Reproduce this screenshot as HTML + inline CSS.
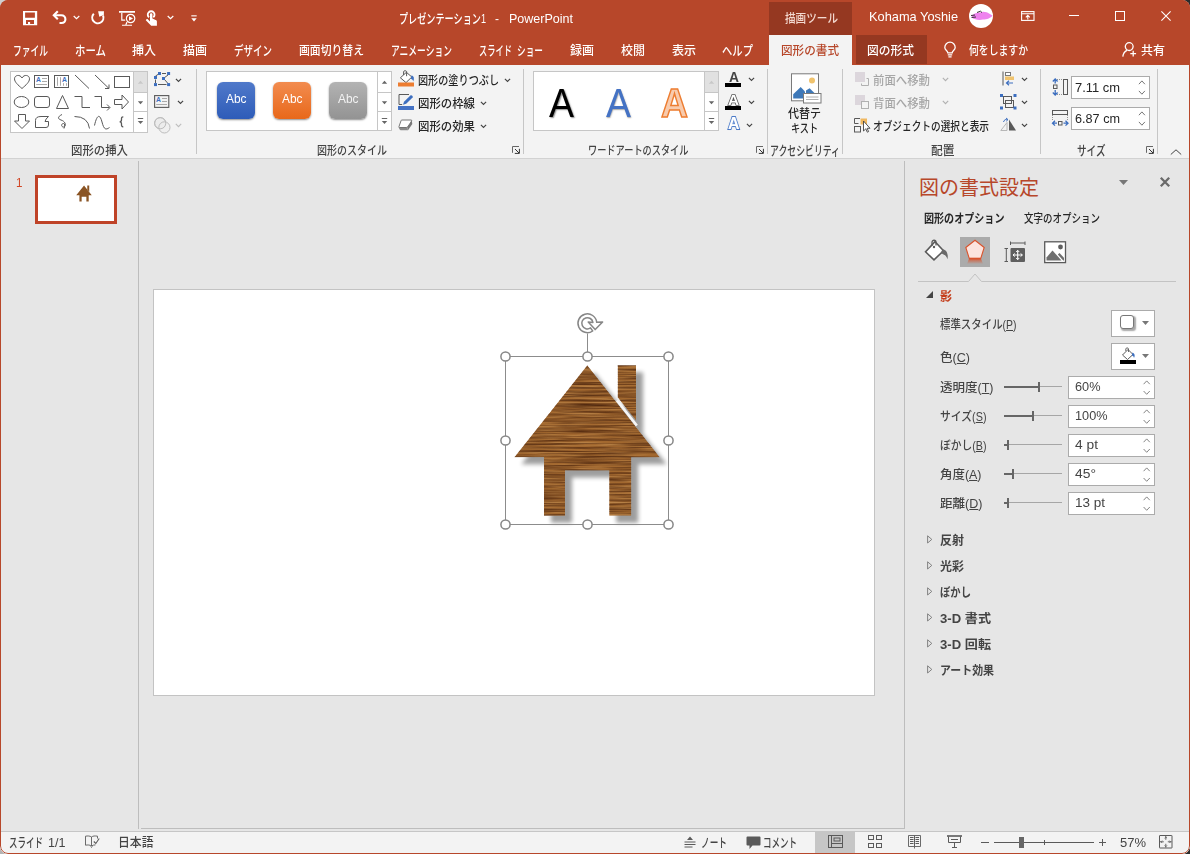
<!DOCTYPE html>
<html lang="ja">
<head>
<meta charset="utf-8">
<title>プレゼンテーション1 - PowerPoint</title>
<style>
html,body{margin:0;padding:0;}
body{width:1190px;height:854px;overflow:hidden;background:#2b2b2b;font-family:"Liberation Sans","Noto Sans CJK JP",sans-serif;font-size:12px;color:#262626;font-weight:500;}
#win{position:absolute;left:0;top:0;width:1190px;height:854px;overflow:hidden;border-radius:8px;background:#e6e6e6;}
#frame{position:absolute;left:0;top:0;width:1188px;height:852px;border:1px solid #b7472a;border-radius:8px;pointer-events:none;z-index:50;}
.abs{position:absolute;}
.t{position:absolute;white-space:nowrap;transform-origin:0 50%;display:inline-block;line-height:16px;height:16px;}
.w{color:#fff;}
.g{color:#444;}
.dis{color:#a6a6a6;}
svg{position:absolute;overflow:visible;}
.vsep{position:absolute;width:1px;background:#c6c6c6;}
#title{position:absolute;left:0;top:0;width:1190px;height:65px;background:#b7472a;}
#ribbon{position:absolute;left:0;top:65px;width:1190px;height:93px;background:#f3f3f3;border-bottom:1px solid #d2d2d2;}
.gal{position:absolute;background:#fff;border:1px solid #c6c6c6;box-sizing:border-box;}
.inp{position:absolute;background:#fff;border:1px solid #ababab;box-sizing:border-box;}
u{text-decoration:underline;text-underline-offset:1px;}
</style>
</head>
<body>
<div class="abs" style="left:0;top:0;width:10px;height:10px;background:#cfcfcf"></div>
<div class="abs" style="left:0;top:844px;width:10px;height:10px;background:#b4b4b4"></div>
<div id="win">
<div id="title">
  <!-- QAT icons -->
  <svg style="left:23px;top:10.800px" width="14.200" height="14.200" viewBox="0 0 14.200 14.200"><path fill-rule="evenodd" fill="#fff" d="M0 0H14.200V14.200H0ZM2.100 1.400V6.700H11.900V1.400ZM3 9.100V12.900H5V11H7.100V12.900H11V9.100Z"/></svg>
  <svg style="left:52px;top:10px" width="15" height="15" viewBox="0 0 15 15" fill="none" stroke="#fff" stroke-width="2.100" stroke-linecap="butt"><path d="M5.800 1.200L1.800 5.200L5.800 9.200"/><path d="M2 5.200H9.200C12 5.200 13.400 7 13.400 9.200C13.400 11.600 12 13 9.500 13H7.500"/></svg>
  <svg style="left:73px;top:15px" width="7" height="5" viewBox="0 0 7 5" fill="none" stroke="#fff" stroke-width="1.200"><path d="M0.700 1L3.500 3.700L6.300 1"/></svg>
  <svg style="left:91px;top:10px" width="14" height="15" viewBox="0 0 14 15" fill="none"><path d="M2.800 3.800A5.600 5.600 0 1 0 12 5.500" stroke="#fff" stroke-width="2"/><path d="M7.100 1.200L13 1.300L12.800 5L8.300 6.800Z" fill="#fff"/></svg>
  <svg style="left:119px;top:10px" width="17" height="16" viewBox="0 0 17 16" fill="none" stroke="#fff" stroke-width="1.200"><path d="M0 1.900H16" stroke-width="1.800"/><path d="M2.800 2.800V10.200H6.200"/><circle cx="11.600" cy="8.500" r="4.200"/><path d="M10 6.200L14 8.500L10 10.800Z" fill="#fff" stroke="none"/><path d="M8 12L6.800 15"/><path d="M3 15.300H13" stroke-width="1.100"/></svg>
  <svg style="left:145px;top:9px" width="14" height="18" viewBox="-1 -1 14 18" fill="#fff" stroke="none"><path d="M3 7.300A3.400 3.400 0 1 1 7.300 7.300" fill="none" stroke="#fff" stroke-width="1.800"/><path d="M4 3.900C4 2.900 6.400 2.900 6.400 3.900V8.500L10.200 10.200C10.800 10.500 10.900 11 10.900 11.500V15.800H5.200L-0.200 10.200C0.300 9 1.300 8.800 2 9.500L4 11.400Z"/></svg>
  <svg style="left:166.500px;top:15px" width="7" height="5" viewBox="0 0 7 5" fill="none" stroke="#fff" stroke-width="1.200"><path d="M0.700 1L3.500 3.700L6.300 1"/></svg>
  <svg style="left:190.500px;top:14.500px" width="6" height="7" viewBox="0 0 6 7" fill="#fff"><rect x="0.300" y="0.300" width="5.400" height="1.100"/><path d="M0.300 3.300H5.700L3 6.500Z"/></svg>

  <span class="t w" style="transform:scaleX(0.7017);left:399px;top:11px;font-size:13px">プレゼンテーション1</span>
  <span class="t w" style="transform:scaleX(0.9209);left:494.5px;top:11px;font-size:13px">-</span>
  <span class="t w" style="transform:scaleX(0.9626);left:509px;top:11px;font-size:13px">PowerPoint</span>

  <!-- contextual tab header -->
  <div class="abs" style="left:769px;top:2px;width:83px;height:33px;background:#953821"></div>
  <span class="t" style="transform:scaleX(0.8831);left:785px;top:11px;font-size:12px;color:#f3d9d0">描画ツール</span>
  <!-- active tab -->
  <div class="abs" style="left:769px;top:35px;width:83px;height:30px;background:#f3f3f3"></div>
  <div class="abs" style="left:856px;top:35px;width:71px;height:29px;background:#953821"></div>

  <span class="t w" style="transform:scaleX(0.9850);left:869px;top:9px;font-size:13px">Kohama Yoshie</span>
  <!-- avatar -->
  <div class="abs" style="left:969px;top:4px;width:24px;height:24px;border-radius:50%;background:#fff"></div>
  <svg style="left:970px;top:10px" width="23" height="12" viewBox="0 0 23 12"><path d="M1.5 6C4 3 7 2.5 10 2.5C13 1 17 2 19 3.5L22.5 5.5C21 8 17 9.5 13 9.500C9 10.5 4 9.5 2.5 8Z" fill="#ee82ee"/><path d="M7 2.5L10.5 1.2L12 2.600M1 5.5L5 5M1.5 7.5L6 7" stroke="#222" stroke-width="0.9" fill="none"/></svg>
  <!-- window buttons -->
  <svg style="left:1021px;top:11px" width="14" height="10" viewBox="0 0 14 10" fill="none" stroke="#fff" stroke-width="1.1"><rect x="0.6" y="0.6" width="12.4" height="8.8"/><path d="M0.6 2.800H13"/><path d="M6.8 8.6V4.600M4.8 6.4L6.8 4.4L8.8 6.4"/></svg>
  <div class="abs" style="left:1069px;top:15px;width:10px;height:1px;background:#fff"></div>
  <div class="abs" style="left:1115px;top:11px;width:8px;height:8px;border:1px solid #fff"></div>
  <svg style="left:1161px;top:11px" width="10" height="10" viewBox="0 0 10 10" fill="none" stroke="#fff" stroke-width="1.1"><path d="M0.4 0.4L9.6 9.6M9.6 0.4L0.4 9.6"/></svg>

  <!-- tabs -->
  <span class="t w" style="transform:scaleX(0.6729);left:13px;top:43px;font-size:13px">ファイル</span>
  <span class="t w" style="transform:scaleX(0.8026);left:75px;top:43px;font-size:13px">ホーム</span>
  <span class="t w" style="transform:scaleX(0.9993);left:132px;top:43px">挿入</span>
  <span class="t w" style="transform:scaleX(0.9993);left:183px;top:43px">描画</span>
  <span class="t w" style="transform:scaleX(0.7305);left:234px;top:43px;font-size:13px">デザイン</span>
  <span class="t w" style="transform:scaleX(0.9026);left:299px;top:43px">画面切り替え</span>
  <span class="t w" style="transform:scaleX(0.6741);left:391px;top:43px;font-size:13px">アニメーション</span>
  <span class="t w" style="transform:scaleX(0.6344);left:478.500px;top:43px;font-size:13px">スライド</span>
  <span class="t w" style="transform:scaleX(0.6664);left:516.500px;top:43px;font-size:13px">ショー</span>
  <span class="t w" style="transform:scaleX(0.9993);left:570px;top:43px">録画</span>
  <span class="t w" style="transform:scaleX(0.9993);left:621px;top:43px">校閲</span>
  <span class="t w" style="transform:scaleX(0.9993);left:672px;top:43px">表示</span>
  <span class="t w" style="transform:scaleX(0.7946);left:722px;top:43px;font-size:13px">ヘルプ</span>
  <span class="t" style="transform:scaleX(0.9664);left:781px;top:43px;color:#b7472a">図形の書式</span>
  <span class="t w" style="transform:scaleX(0.9788);left:867px;top:43px">図の形式</span>
  <svg style="left:943.500px;top:42px" width="12" height="16" viewBox="0 0 12 16" fill="none" stroke="#fff" stroke-width="1.300"><path d="M3.800 10.800C3.800 8.800 0.800 8 0.800 5.400A5.200 5.200 0 0 1 11.200 5.400C11.200 8 8.200 8.800 8.200 10.800Z"/><path d="M3.800 12.800H8.200M4.400 14.800H7.600"/></svg>
  <span class="t w" style="transform:scaleX(0.8193);left:969px;top:43px">何をしますか</span>
  <svg style="left:1122px;top:42px" width="15" height="15" viewBox="0 0 15 15" fill="none" stroke="#fff" stroke-width="1.300"><circle cx="7.200" cy="4.600" r="3.900"/><path d="M0.800 14.600C1.200 11.400 2.800 9.400 5 8.400"/><path d="M11.200 8.800V14.600M8.300 11.700H14.100"/></svg>
  <span class="t w" style="transform:scaleX(0.9993);left:1141px;top:43px">共有</span>
</div>
<div id="ribbon">
  <!-- coordinates inside ribbon: y = pageY - 65 -->
  <!-- ===== 図形の挿入 ===== -->
  <div class="gal" style="left:10px;top:6px;width:138px;height:62px"></div>
  <div class="abs" style="left:133px;top:7px;width:14px;height:20px;background:#e1e1e1"></div>
  <div class="abs" style="left:133px;top:7px;width:1px;height:60px;background:#c6c6c6"></div>
  <div class="abs" style="left:133px;top:27px;width:14px;height:1px;background:#c6c6c6"></div>
  <div class="abs" style="left:133px;top:46px;width:14px;height:1px;background:#c6c6c6"></div>
  <svg style="left:137px;top:15px" width="7" height="4" viewBox="0 0 7 4"><path d="M0.800 3.800L3.500 0.800L6.200 3.800Z" fill="#c8c8c8"/></svg>
  <svg style="left:137px;top:36px" width="7" height="4" viewBox="0 0 7 4"><path d="M0.800 0.200L3.500 3.200L6.200 0.200Z" fill="#666"/></svg>
  <svg style="left:137px;top:53px" width="7" height="8" viewBox="0 0 7 8"><rect x="0.800" y="0" width="5.400" height="1" fill="#666"/><path d="M0.800 3L3.500 6L6.200 3Z" fill="#666"/></svg>
  <!-- shapes grid -->
  <svg style="left:12px;top:8px" width="120" height="60" viewBox="12 73 120 60" fill="none" stroke="#595959" stroke-width="1">
    <!-- row1 y~81 -->
    <path d="M22 88.5C18 85 14.5 82 14.5 78.8C14.5 75 20 74 22 78C24 74 29.500 75 29.500 78.8C29.500 82 26 85 22 88.500Z"/>
    <rect x="34.500" y="75.500" width="14" height="12"/><path d="M42 78.500H47M42 81.500H47M36.200 84.500H47" stroke="#a0a0a0" stroke-width="0.900"/>
    <text x="36" y="82" font-size="6.800" font-weight="bold" fill="#3c6ebf" stroke="none" font-family="Liberation Sans,sans-serif">A</text>
    <rect x="54.500" y="75.500" width="14" height="12"/><path d="M57.500 77.200V85.800M60.500 77.200V85.800M63.500 83.200V85.800M66.500 83.200V85.800" stroke="#a0a0a0" stroke-width="0.900"/>
    <text x="62" y="82" font-size="6.800" font-weight="bold" fill="#3c6ebf" stroke="none" font-family="Liberation Sans,sans-serif">A</text>
    <path d="M75 75L89 88.500"/>
    <path d="M95 75L109 88.500M109 84.500V88.500H105"/>
    <rect x="114.500" y="76.500" width="15" height="11"/>
    <!-- row2 y~102 -->
    <ellipse cx="21.500" cy="102" rx="7.300" ry="5.500"/>
    <rect x="34.500" y="96.500" width="15" height="11" rx="2.500"/>
    <path d="M62.500 95.500L68.500 108.500H56.500Z"/>
    <path d="M74.500 96.500H82V107.500H90"/>
    <path d="M94.500 96.500H101.500V107.500H109.500M107 104.500L110 107.500L107 110.500"/>
    <path d="M114.500 99.500H122V95L128.500 102L122 109V104.500H114.500Z"/>
    <!-- row3 y~122 -->
    <path d="M18.500 114.500H25.500V121H29.500L22 128.500L14.500 121H18.500Z"/>
    <path d="M35.500 127.500V120.500Q35.500 116.500 41 116.500H48.500Q45.500 119 45 121.500H48.500V125Q48.500 127.500 46 127.500Z"/>
    <path d="M62 114.500C57 117 58 119 61 120C66 121.500 66.500 126.500 63.500 127C61 127 61 123.500 63.500 123.500C65 123.500 65 126 64 128.500"/>
    <path d="M74.500 116.500Q88 116.500 89.500 128.500"/>
    <path d="M94.500 125.500C97 114 100 114 102 122C104 130 106 130 109.500 127.500"/>
    <path d="M123.300 116.800C121.300 116.800 121.500 118.300 121.500 119.800C121.500 121.200 120.800 121.800 119.600 121.800C120.800 121.800 121.500 122.400 121.500 123.800C121.500 125.300 121.300 126.800 123.300 126.800" stroke-width="1.300"/>
  </svg>
  <!-- right small buttons -->
  <svg style="left:153px;top:6px" width="18" height="16" viewBox="0 0 18 16" fill="none"><path d="M9 2.500H13M2.500 5L6 2.800M15 4L11 7M11.500 8.500L15 12.500M2.500 8.500V12M5 13.500H13.500" stroke="#595959" stroke-width="1"/><g fill="#3c6ebf"><rect x="5" y="1" width="3" height="3"/><rect x="14.100" y="1" width="3" height="3"/><rect x="1" y="5" width="3" height="3"/><rect x="9" y="6" width="3" height="3"/><rect x="1" y="12.100" width="3" height="3"/><rect x="14.100" y="12.100" width="3" height="3"/></g></svg>
  <svg style="left:174.700px;top:12.500px" width="7" height="5" viewBox="0 0 7 5" fill="none" stroke="#444" stroke-width="1.150"><path d="M0.900 0.800L3.500 3.400L6.100 0.800"/></svg>
  <svg style="left:154px;top:30px" width="16" height="13" viewBox="0 0 16 13" fill="none" stroke="#595959" stroke-width="1.100"><rect x="0.600" y="0.600" width="14.200" height="11.800"/><path d="M8 3.500H13M8 6.500H13M2.200 9.500H13" stroke="#a0a0a0" stroke-width="0.900"/><text x="2" y="7.200" font-size="6.800" font-weight="bold" fill="#3c6ebf" stroke="none" font-family="Liberation Sans,sans-serif">A</text></svg>
  <svg style="left:177px;top:35px" width="7" height="5" viewBox="0 0 7 5" fill="none" stroke="#444" stroke-width="1.150"><path d="M0.900 0.800L3.500 3.400L6.100 0.800"/></svg>
  <svg style="left:154px;top:52px" width="17" height="17" viewBox="0 0 17 17" stroke="#bdbdbd" stroke-width="1"><circle cx="6.200" cy="6.200" r="5.600" fill="#ececec"/><circle cx="10.400" cy="10.400" r="5.600" fill="#ececec" fill-opacity="0.700"/><circle cx="6.200" cy="6.200" r="5.600" fill="none"/></svg>
  <svg style="left:175px;top:58px" width="7" height="5" viewBox="0 0 7 5" fill="none" stroke="#bdbdbd" stroke-width="1.100"><path d="M0.800 0.800L3.500 3.600L6.200 0.800"/></svg>
  <span class="t g" style="transform:scaleX(0.9498);left:70.500px;top:77.500px">図形の挿入</span>
  <div class="vsep" style="left:196px;top:4px;height:85px"></div>

  <!-- ===== 図形のスタイル ===== -->
  <div class="gal" style="left:206px;top:6px;width:186px;height:60px"></div>
  <div class="abs" style="left:377px;top:7px;width:1px;height:58px;background:#c6c6c6"></div>
  <div class="abs" style="left:377px;top:27px;width:14px;height:1px;background:#c6c6c6"></div>
  <div class="abs" style="left:377px;top:46px;width:14px;height:1px;background:#c6c6c6"></div>
  <svg style="left:381px;top:15px" width="7" height="4" viewBox="0 0 7 4"><path d="M0.800 3.800L3.500 0.800L6.200 3.800Z" fill="#666"/></svg>
  <svg style="left:381px;top:36px" width="7" height="4" viewBox="0 0 7 4"><path d="M0.800 0.200L3.500 3.200L6.200 0.200Z" fill="#666"/></svg>
  <svg style="left:381px;top:53px" width="7" height="8" viewBox="0 0 7 8"><rect x="0.800" y="0" width="5.400" height="1" fill="#666"/><path d="M0.800 3L3.500 6L6.200 3Z" fill="#666"/></svg>
  <div class="abs" style="left:217.300px;top:16.500px;width:37.600px;height:37px;border-radius:6px;background:linear-gradient(#5079ca,#2e5cb8);box-shadow:0 1px 2px rgba(0,0,0,.45)"></div>
  <div class="abs" style="left:273.300px;top:16.500px;width:37.600px;height:37px;border-radius:6px;background:linear-gradient(#f28c50,#e8681a);box-shadow:0 1px 2px rgba(0,0,0,.45)"></div>
  <div class="abs" style="left:329.300px;top:16.500px;width:37.600px;height:37px;border-radius:6px;background:linear-gradient(#b3b3b3,#939393);box-shadow:0 1px 2px rgba(0,0,0,.45)"></div>
  <span class="t w" style="transform:scaleX(0.9909);left:226px;top:26px;font-size:12px">Abc</span>
  <span class="t w" style="transform:scaleX(0.9909);left:282px;top:26px;font-size:12px">Abc</span>
  <span class="t w" style="transform:scaleX(0.9909);left:338px;top:26px;font-size:12px;color:#f2f2f2">Abc</span>

  <svg style="left:398px;top:4px" width="17" height="18" viewBox="0 0 17 18" fill="none"><path d="M2.400 8.800L8.400 3.300L13.800 8L8 13.600Z" fill="#fff" stroke="#595959" stroke-width="1"/><path d="M5.600 6V2.600C5.600 1.500 8.600 1.500 8.600 2.600V7.200" stroke="#595959" stroke-width="1"/><path d="M13.600 6.200C16 7 16.600 9.500 15.200 12.500C15 11 14.200 10.200 12.800 9.800Z" fill="#3c6ebf"/><rect x="0" y="13.500" width="16" height="4" fill="#ed7d31"/></svg>
  <span class="t" style="transform:scaleX(0.8427);left:417.500px;top:7.500px;color:#262626">図形の塗りつぶし</span>
  <svg style="left:503.500px;top:12.500px" width="7" height="5" viewBox="0 0 7 5" fill="none" stroke="#444" stroke-width="1.150"><path d="M0.900 0.800L3.500 3.400L6.100 0.800"/></svg>

  <svg style="left:398px;top:29px" width="17" height="17" viewBox="0 0 17 17" fill="none"><path d="M11 0.500H1V10.500H4.200" stroke="#595959" stroke-width="1"/><path d="M5 10.800L6 7.800L12.400 1.400C13.400 0.400 15.600 2.400 14.600 3.500L8.200 9.800Z" fill="#3c6ebf"/><rect x="0" y="12" width="16" height="4" fill="#4472c4"/></svg>
  <span class="t" style="transform:scaleX(0.9498);left:417.500px;top:30.500px;color:#262626">図形の枠線</span>
  <svg style="left:479.500px;top:36px" width="7" height="5" viewBox="0 0 7 5" fill="none" stroke="#444" stroke-width="1.150"><path d="M0.900 0.800L3.500 3.400L6.100 0.800"/></svg>

  <svg style="left:398px;top:54px" width="16" height="12" viewBox="0 0 16 12" fill="none"><path d="M0.800 8L9.300 8.500L10 11.300H2.500Q1 11 0.800 8Z" fill="#8a8a8a"/><path d="M13.800 1.500L14.300 5L10 11.300L9.300 8.300Z" fill="#7a7a7a"/><path d="M3.800 1H13Q14.200 1 13.600 2L9.600 8Q9.200 8.500 8.200 8.500H1.600Q0.400 8.500 1 7.500L3 1.800Q3.200 1 3.800 1Z" fill="#fff" stroke="#6a6a6a" stroke-width="0.900"/></svg>
  <span class="t" style="transform:scaleX(0.9498);left:417.500px;top:53.500px;color:#262626">図形の効果</span>
  <svg style="left:479.500px;top:58.500px" width="7" height="5" viewBox="0 0 7 5" fill="none" stroke="#444" stroke-width="1.150"><path d="M0.900 0.800L3.500 3.400L6.100 0.800"/></svg>

  <span class="t g" style="transform:scaleX(0.8332);left:317px;top:77.500px">図形のスタイル</span>
  <svg style="left:512px;top:81px" width="8" height="8" viewBox="0 0 8 8" fill="none" stroke="#666" stroke-width="1"><path d="M0.500 6.800V0.500H7" stroke="#666"/><path d="M3 3L7 7M7.400 2.800V7.400H2.800" stroke="#333"/></svg>
  <div class="vsep" style="left:523px;top:4px;height:85px"></div>
  <!-- ===== ワードアートのスタイル ===== -->
  <div class="gal" style="left:533px;top:6px;width:186px;height:60px"></div>
  <div class="abs" style="left:704px;top:7px;width:14px;height:20px;background:#e1e1e1"></div>
  <div class="abs" style="left:704px;top:7px;width:1px;height:58px;background:#c6c6c6"></div>
  <div class="abs" style="left:704px;top:27px;width:14px;height:1px;background:#c6c6c6"></div>
  <div class="abs" style="left:704px;top:46px;width:14px;height:1px;background:#c6c6c6"></div>
  <svg style="left:708px;top:15px" width="7" height="4" viewBox="0 0 7 4"><path d="M0.800 3.800L3.500 0.800L6.200 3.800Z" fill="#c8c8c8"/></svg>
  <svg style="left:708px;top:36px" width="7" height="4" viewBox="0 0 7 4"><path d="M0.800 0.200L3.500 3.200L6.200 0.200Z" fill="#666"/></svg>
  <svg style="left:708px;top:53px" width="7" height="8" viewBox="0 0 7 8"><rect x="0.800" y="0" width="5.400" height="1" fill="#666"/><path d="M0.800 3L3.500 6L6.200 3Z" fill="#666"/></svg>
  <span class="t" style="transform:scaleX(0.9368);left:549px;top:14px;font-size:40px;line-height:48px;height:48px;color:#000;text-shadow:1px 1px 1.500px rgba(0,0,0,.45)">A</span>
  <span class="t" style="transform:scaleX(0.9368);left:606px;top:14px;font-size:40px;line-height:48px;height:48px;color:#4472c4;text-shadow:0.500px 1px 1.500px rgba(0,0,0,.35)">A</span>
  <span class="t" style="transform:scaleX(0.9346);left:660.500px;top:14px;font-size:40px;line-height:48px;height:48px;color:#f8cbad;-webkit-text-stroke:1.500px #ed7d31;font-weight:bold">A</span>

  <!-- text fill / outline / effects -->
  <span class="t" style="transform:scaleX(0.9877);left:728.500px;top:4px;font-size:14px;color:#444;font-weight:bold">A</span>
  <div class="abs" style="left:725px;top:18px;width:16px;height:4px;background:#000"></div>
  <svg style="left:747.500px;top:12px" width="7" height="5" viewBox="0 0 7 5" fill="none" stroke="#444" stroke-width="1.150"><path d="M0.900 0.800L3.500 3.400L6.100 0.800"/></svg>
  <span class="t" style="transform:scaleX(1.0864);left:727.500px;top:26.500px;font-size:14px;color:#fff;-webkit-text-stroke:1.500px #555;paint-order:stroke fill;font-weight:bold">A</span>
  <div class="abs" style="left:725px;top:41px;width:16px;height:4px;background:#000"></div>
  <svg style="left:747.500px;top:35px" width="7" height="5" viewBox="0 0 7 5" fill="none" stroke="#444" stroke-width="1.150"><path d="M0.900 0.800L3.500 3.400L6.100 0.800"/></svg>
  <span class="t" style="transform:scaleX(0.9364);left:727.500px;top:51px;font-size:17px;color:#fff;-webkit-text-stroke:1.800px #3c6ebf;paint-order:stroke fill;font-weight:bold;text-shadow:0 0 2px #8fb0e8">A</span>
  <svg style="left:745.500px;top:58px" width="7" height="5" viewBox="0 0 7 5" fill="none" stroke="#444" stroke-width="1.150"><path d="M0.900 0.800L3.500 3.400L6.100 0.800"/></svg>

  <span class="t g" style="transform:scaleX(0.7655);left:587.500px;top:77.500px">ワードアートのスタイル</span>
  <svg style="left:756px;top:81px" width="8" height="8" viewBox="0 0 8 8" fill="none" stroke="#666" stroke-width="1"><path d="M0.500 6.800V0.500H7" stroke="#666"/><path d="M3 3L7 7M7.400 2.800V7.400H2.800" stroke="#333"/></svg>
  <div class="vsep" style="left:767px;top:4px;height:85px"></div>

  <!-- ===== アクセシビリティ ===== -->
  <svg style="left:790px;top:8px" width="32" height="31" viewBox="0 0 32 31" fill="none"><rect x="1.500" y="0.800" width="27" height="27" fill="#fff" stroke="#7a7a7a" stroke-width="1"/><circle cx="22" cy="7.500" r="3" fill="#f0c36d"/><path d="M3.200 25.500V21.300L10.700 14L15 18.500V25.500Z" fill="#3e78b8"/><path d="M16 17.500L19.600 15.200L26.500 22V25.500H16Z" fill="#3e78b8"/><rect x="13.500" y="20.500" width="17.500" height="9.500" fill="#fff" stroke="#7a7a7a" stroke-width="1"/><path d="M16 24H28.500M16 26.500H28.500" stroke="#9a9a9a" stroke-width="0.800"/></svg>
  <span class="t" style="transform:scaleX(0.9163);left:788px;top:40.500px;color:#262626">代替テ</span>
  <span class="t" style="transform:scaleX(0.7576);left:791px;top:56px;color:#262626">キスト</span>
  <span class="t g" style="transform:scaleX(0.6824);left:770px;top:77.500px;font-size:13px">アクセシビリティ</span>
  <div class="vsep" style="left:842px;top:4px;height:85px"></div>

  <!-- ===== 配置 ===== -->
  <svg style="left:855px;top:7px" width="15" height="14" viewBox="0 0 15 14" fill="none"><rect x="0" y="0" width="10" height="10" fill="#dcd6dc"/><path d="M11.500 6.500H13.500V13.500H6.500V11.500" stroke="#b0b0b0" stroke-width="1"/></svg>
  <span class="t dis" style="transform:scaleX(0.9498);left:873px;top:7.500px">前面へ移動</span>
  <svg style="left:941.500px;top:12px" width="7" height="5" viewBox="0 0 7 5" fill="none" stroke="#b0b0b0" stroke-width="1.100"><path d="M0.800 0.800L3.500 3.600L6.200 0.800"/></svg>
  <svg style="left:855px;top:30px" width="15" height="14" viewBox="0 0 15 14" fill="none"><rect x="0" y="0" width="10" height="10" fill="#dcd6dc"/><rect x="6.500" y="6.500" width="7" height="7" fill="#f3f3f3" stroke="#b0b0b0" stroke-width="1"/></svg>
  <span class="t dis" style="transform:scaleX(0.9498);left:873px;top:30.500px">背面へ移動</span>
  <svg style="left:941.500px;top:35px" width="7" height="5" viewBox="0 0 7 5" fill="none" stroke="#b0b0b0" stroke-width="1.100"><path d="M0.800 0.800L3.500 3.600L6.200 0.800"/></svg>
  <svg style="left:854px;top:52px" width="17" height="17" viewBox="0 0 17 17" fill="none"><path d="M6 1.500H0.500V6.500H4.500" stroke="#595959" stroke-width="1"/><rect x="0.500" y="9.500" width="6" height="5.500" stroke="#595959" stroke-width="1"/><rect x="6.500" y="1.500" width="6.500" height="6" fill="#f0b860"/><path d="M9.500 4V14L11.800 11.800L13.300 15.200L14.600 14.600L13.100 11.300H16Z" fill="#fff" stroke="#444" stroke-width="0.900"/></svg>
  <span class="t" style="transform:scaleX(0.8055);left:873px;top:53.500px;color:#262626">オブジェクトの選択と表示</span>
  <!-- align / group / rotate -->
  <svg style="left:1002px;top:6px" width="13" height="15" viewBox="0 0 13 15" fill="none"><path d="M1 0.500V14.500" stroke="#595959" stroke-width="1"/><rect x="3.500" y="1.500" width="5" height="3" stroke="#7a7a7a" stroke-width="1" fill="#fff"/><rect x="3" y="5.500" width="9" height="3.500" fill="#f0c36d"/><path d="M11 12H4.500M7 9.700L4.500 12L7 14.300" stroke="#3c6ebf" stroke-width="1.200"/></svg>
  <svg style="left:1020.500px;top:12px" width="7" height="5" viewBox="0 0 7 5" fill="none" stroke="#444" stroke-width="1.150"><path d="M0.900 0.800L3.500 3.400L6.100 0.800"/></svg>
  <svg style="left:1000px;top:29px" width="17" height="16" viewBox="0 0 17 16" fill="none"><rect x="3.500" y="2.500" width="8" height="7" stroke="#595959" stroke-width="1"/><rect x="5.500" y="6.500" width="8" height="7" stroke="#595959" stroke-width="1"/><g fill="#3c6ebf"><rect x="0" y="0" width="3" height="3"/><rect x="13.500" y="0" width="3" height="3"/><rect x="0" y="12.500" width="3" height="3"/><rect x="13.500" y="12.500" width="3" height="3"/></g></svg>
  <svg style="left:1020.500px;top:35px" width="7" height="5" viewBox="0 0 7 5" fill="none" stroke="#444" stroke-width="1.150"><path d="M0.900 0.800L3.500 3.400L6.100 0.800"/></svg>
  <svg style="left:1000px;top:53px" width="17" height="13" viewBox="0 0 17 13" fill="none"><path d="M7 12.500H0.800L7 4.500Z" stroke="#b0b0b0" stroke-width="0.900"/><path d="M9 12.500V1.500L16 12.500Z" fill="#595959"/><path d="M3.500 4C4 1.800 6 1 7.500 1.500M6 0L8 1.600L6.200 3.200" stroke="#3c6ebf" stroke-width="1"/></svg>
  <svg style="left:1020.500px;top:58px" width="7" height="5" viewBox="0 0 7 5" fill="none" stroke="#444" stroke-width="1.150"><path d="M0.900 0.800L3.500 3.400L6.100 0.800"/></svg>
  <span class="t g" style="transform:scaleX(0.9785);left:930.500px;top:77.500px">配置</span>
  <div class="vsep" style="left:1040px;top:4px;height:85px"></div>

  <!-- ===== サイズ ===== -->
  <svg style="left:1052px;top:13px" width="17" height="18" viewBox="0 0 17 18" fill="none"><rect x="11.500" y="1.500" width="4" height="15" stroke="#595959" stroke-width="1"/><path d="M5 1.500H11M5 16.500H11" stroke="#7a7a7a" stroke-width="0.800" stroke-dasharray="1 1"/><rect x="1.500" y="7" width="3.500" height="3.500" stroke="#595959" stroke-width="1"/><path d="M3.200 5.500V1.500M0.800 3.500L3.200 1L5.600 3.500M3.200 12V16.500M0.800 14.500L3.200 17L5.600 14.500" stroke="#3c6ebf" stroke-width="1.300"/></svg>
  <div class="inp" style="left:1071px;top:11px;width:79px;height:23px"></div>
  <span class="t" style="transform:scaleX(0.9938);left:1075px;top:14.500px;font-size:13px;color:#262626">7.11 cm</span>
  <svg style="left:1137.500px;top:14px" width="8" height="17" viewBox="0 0 8 17" fill="none" stroke="#666" stroke-width="0.900"><path d="M0.900 5.200L3.900 1.900L6.900 5.200M0.900 11.900L3.900 15.200L6.900 11.900"/></svg>
  <svg style="left:1052px;top:45px" width="17" height="17" viewBox="0 0 17 17" fill="none"><rect x="0.500" y="0.500" width="15" height="4" stroke="#595959" stroke-width="1"/><path d="M0.500 5V11M15.500 5V11" stroke="#7a7a7a" stroke-width="0.800" stroke-dasharray="1 1"/><rect x="6.500" y="11.500" width="3.500" height="3.500" stroke="#595959" stroke-width="1"/><path d="M5 13.200H0.800M3 10.800L0.500 13.200L3 15.600M11.500 13.200H15.500M13.500 10.800L16 13.200L13.500 15.600" stroke="#3c6ebf" stroke-width="1.300"/></svg>
  <div class="inp" style="left:1071px;top:42px;width:79px;height:23px"></div>
  <span class="t" style="transform:scaleX(0.9730);left:1075px;top:46px;font-size:13px;color:#262626">6.87 cm</span>
  <svg style="left:1137.500px;top:45px" width="8" height="17" viewBox="0 0 8 17" fill="none" stroke="#666" stroke-width="0.900"><path d="M0.900 5.200L3.900 1.900L6.900 5.200M0.900 11.900L3.900 15.200L6.900 11.900"/></svg>
  <span class="t g" style="transform:scaleX(0.7379);left:1077px;top:77.500px;font-size:13px">サイズ</span>
  <svg style="left:1146px;top:81px" width="8" height="8" viewBox="0 0 8 8" fill="none" stroke="#666" stroke-width="1"><path d="M0.500 6.800V0.500H7" stroke="#666"/><path d="M3 3L7 7M7.400 2.800V7.400H2.800" stroke="#333"/></svg>
  <div class="vsep" style="left:1157px;top:4px;height:85px"></div>
  <svg style="left:1170px;top:84px" width="12" height="6" viewBox="0 0 12 6" fill="none" stroke="#444" stroke-width="1"><path d="M0.800 5.500L6 0.800L11.200 5.500"/></svg>
</div>
<!-- ===== main work area ===== -->
<div class="abs" style="left:138px;top:161px;width:1px;height:668px;background:#bdbdbd"></div>
<div class="abs" style="left:141px;top:828px;width:764px;height:1px;background:#bdbdbd"></div>
<div class="abs" style="left:904px;top:161px;width:1px;height:668px;background:#bdbdbd"></div>
<!-- thumbnail -->
<span class="t" style="transform:scaleX(0.8985);left:15.500px;top:175px;font-size:13px;color:#d24726">1</span>
<div class="abs" style="left:35px;top:175px;width:76px;height:43px;border:3px solid #bf4328;background:#fff"></div>
<svg style="left:76px;top:185px" width="16" height="17" viewBox="512 364 150 154"><path d="M587.300 365.200L659.800 457.300H631.200V515.800H609.200V470.500H565V515.800H544V457.300H514.300Z" fill="#8a5424"/><path d="M617.700 365.200H636V427L617.700 404Z" fill="#8a5424"/></svg>
<!-- slide -->
<div class="abs" style="left:153px;top:289px;width:720px;height:405px;border:1px solid #c3c3c3;background:#fff"></div>
<svg style="left:480px;top:300px" width="220" height="240" viewBox="480 300 220 240">
  <defs>
    <filter id="wood" x="0" y="0" width="100%" height="100%" color-interpolation-filters="sRGB">
      <feTurbulence type="fractalNoise" baseFrequency="0.016 0.55" numOctaves="3" seed="7" result="n"/>
      <feColorMatrix in="n" type="matrix" values="0 0 0 0 0  0 0 0 0 0  0 0 0 0 0  1.900 0 0 0 -0.640" result="a"/>
      <feFlood flood-color="#52290f" result="dark"/>
      <feComposite in="dark" in2="a" operator="in" result="streak"/>
      <feTurbulence type="fractalNoise" baseFrequency="0.025 0.8" numOctaves="2" seed="23" result="n2"/>
      <feColorMatrix in="n2" type="matrix" values="0 0 0 0 0  0 0 0 0 0  0 0 0 0 0  0 1.600 0 0 -0.620" result="a2"/>
      <feFlood flood-color="#c08c50" result="light"/>
      <feComposite in="light" in2="a2" operator="in" result="hl"/>
      <feMerge result="m"><feMergeNode in="SourceGraphic"/><feMergeNode in="hl"/><feMergeNode in="streak"/></feMerge>
      <feComposite in="m" in2="SourceGraphic" operator="in"/>
    </filter>
    <filter id="shd" x="-20%" y="-20%" width="150%" height="150%"><feGaussianBlur stdDeviation="2"/></filter>
  </defs>
  <g transform="translate(7,7)" filter="url(#shd)" opacity="0.380" fill="#000">
    <path d="M587.300 365.200L659.800 457.300H631.200V515.800H609.200V470.500H565V515.800H544V457.300H514.300Z"/><path d="M617.700 365.200H636V427L617.700 404Z"/>
  </g>
  <path d="M617 400.500L636.800 425.600" stroke="#f6f6f6" stroke-width="2.600" fill="none"/>
  <g filter="url(#wood)" fill="#a2682f">
    <path d="M587.300 365.200L659.800 457.300H631.200V515.800H609.200V470.500H565V515.800H544V457.300H514.300Z"/><path d="M617.700 365.200H636V420.500L617.700 397.500Z"/>
  </g>
  <!-- selection -->
  <g fill="none" stroke="#8c8c8c" stroke-width="1">
    <rect x="505.500" y="356.500" width="163" height="168"/>
    <path d="M587.500 333.500V352"/>
  </g>
  <g fill="#fff" stroke="#868686" stroke-width="1.500">
    <circle cx="505.500" cy="356.500" r="4.600"/><circle cx="587.500" cy="356.500" r="4.600"/><circle cx="668.500" cy="356.500" r="4.600"/>
    <circle cx="505.500" cy="440.500" r="4.600"/><circle cx="668.500" cy="440.500" r="4.600"/>
    <circle cx="505.500" cy="524.500" r="4.600"/><circle cx="587.500" cy="524.500" r="4.600"/><circle cx="668.500" cy="524.500" r="4.600"/>
  </g>
  <path d="M592.700 331A9.400 9.400 0 1 1 596.700 322.300L602.600 322L595.200 329.600L588.200 322L592.900 322.400A5.600 5.600 0 1 0 590.500 327.900Z" fill="#fff" stroke="#868686" stroke-width="1.500" stroke-linejoin="round"/>
</svg>
<!-- ===== right pane ===== -->
<span class="t" style="transform:scaleX(1.0000);left:919px;top:173.500px;font-size:20px;line-height:28px;height:28px;font-weight:400;color:#b7472a">図の書式設定</span>
<svg style="left:1119px;top:180px" width="9" height="5" viewBox="0 0 9 5"><path d="M0 0H9L4.500 5Z" fill="#777"/></svg>
<svg style="left:1160px;top:177px" width="10" height="10" viewBox="0 0 10 10" fill="none" stroke="#6a6a6a" stroke-width="2.300"><path d="M0.800 0.800L9.200 9.200M9.200 0.800L0.800 9.200"/></svg>
<span class="t" style="transform:scaleX(0.8384);left:923.500px;top:211px;font-weight:bold;color:#262626">図形のオプション</span>
<span class="t" style="transform:scaleX(0.7915);left:1023.500px;top:211px;color:#262626">文字のオプション</span>
<!-- icon row -->
<svg style="left:923.500px;top:239px" width="25" height="23.500" viewBox="0 0 25 22" preserveAspectRatio="none" fill="none"><path d="M1.500 12L11 2.500L19.500 11L10 19.500Z" fill="#fff" stroke="#5a5a5a" stroke-width="1.500"/><path d="M8 6.500V3C8 0.500 12 0.500 12 3V6" stroke="#5a5a5a" stroke-width="1.300"/><circle cx="10" cy="7.500" r="1.200" fill="#5a5a5a"/><path d="M18.500 9.500C22.500 10 24.500 13.500 23.500 19C22.500 16 20.500 14 16.500 13.500Z" fill="#6a6a6a"/></svg>
<div class="abs" style="left:960px;top:237px;width:30px;height:30px;background:#ababab"></div>
<svg style="left:960px;top:237px" width="30" height="30" viewBox="0 0 30 30"><defs><linearGradient id="rf" x1="0" y1="0" x2="0" y2="1"><stop offset="0" stop-color="#d9532c" stop-opacity="0.850"/><stop offset="1" stop-color="#d9532c" stop-opacity="0"/></linearGradient></defs><path d="M15 3.300L24.200 10.500L20.800 21.300H9.200L5.800 10.500Z" fill="#fce4de" stroke="#d9532c" stroke-width="1.100"/><path d="M9 21.800H21L23 27H7Z" fill="url(#rf)"/><path d="M9 21.600H21" stroke="#d9532c" stroke-width="1.400"/></svg>
<svg style="left:1004px;top:240px" width="22" height="23" viewBox="0 0 22 23" fill="none"><path d="M6.500 1.500V5M6.500 3H21M21 1.500V5" stroke="#5a5a5a" stroke-width="1"/><path d="M0.500 8.500H4M2.300 8.500V21.500M0.500 21.500H4" stroke="#5a5a5a" stroke-width="1"/><rect x="6.500" y="8" width="14.500" height="14" rx="1" fill="#5f5f5f"/><path d="M13.700 10.500V19.500M9.200 15H18.200" stroke="#fff" stroke-width="1.100"/><path d="M12.200 12L13.700 10.300L15.200 12M12.200 18L13.700 19.700L15.200 18M10.800 13.500L9 15L10.800 16.500M16.600 13.500L18.400 15L16.600 16.500" stroke="#fff" stroke-width="1"/></svg>
<svg style="left:1043px;top:241px" width="24" height="23" viewBox="0 0 24 23" fill="none"><rect x="1.700" y="0.800" width="20.800" height="20.800" fill="#fff" stroke="#5a5a5a" stroke-width="1.300"/><circle cx="17.500" cy="6" r="2.400" fill="#5f5f5f"/><path d="M3.500 19.500V16.500L9.500 9.500L18.500 19.500Z" fill="#6f6f6f"/><path d="M14.800 13.500L16.500 12L21 16.800V19.500H20.200Z" fill="#6f6f6f"/></svg>
<!-- divider with notch -->
<svg style="left:918px;top:272px" width="258" height="11" viewBox="0 0 258 11" fill="none" stroke="#c3c3c3" stroke-width="1"><path d="M0 9.500H50.500L57 2L63.500 9.500H258"/></svg>
<!-- 影 section -->
<svg style="left:925.500px;top:291px" width="7" height="7" viewBox="0 0 7 7"><path d="M7 0V7H0Z" fill="#444"/></svg>
<span class="t" style="transform:scaleX(0.9588);left:940px;top:289px;font-size:12.500px;font-weight:bold;color:#c43e1c">影</span>
<span class="t g" style="transform:scaleX(0.8692);left:940px;top:317px">標準スタイル(<u>P</u>)</span>
<div class="abs" style="left:1111px;top:310px;width:42px;height:25px;border:1px solid #ababab;background:#fff"></div>
<div class="abs" style="left:1120px;top:315px;width:11.500px;height:11.500px;border:1.200px solid #777;border-radius:3px;background:#fff;box-shadow:1.500px 1.500px 1.500px rgba(0,0,0,.35)"></div>
<svg style="left:1142px;top:321px" width="7" height="4" viewBox="0 0 7 4"><path d="M0 0H7L3.500 4Z" fill="#777"/></svg>
<span class="t g" style="transform:scaleX(1.0463);left:940px;top:349.500px">色(<u>C</u>)</span>
<div class="abs" style="left:1111px;top:343px;width:42px;height:25px;border:1px solid #ababab;background:#fff"></div>
<svg style="left:1119px;top:345px" width="18" height="19" viewBox="0 0 18 19" fill="none"><path d="M3.500 10L9 4.500L14 9.500L8.500 14.500Z" fill="#fff" stroke="#5a5a5a" stroke-width="1"/><path d="M6.800 6V4C6.800 2.500 9.500 2.500 9.500 4V7" stroke="#5a5a5a" stroke-width="0.900"/><path d="M13.500 7.500C15.800 8.500 16.300 10.500 15 13C14.800 11.500 14 10.800 12.800 10.500Z" fill="#3c6ebf"/><rect x="1" y="15" width="16" height="4" fill="#000"/></svg>
<svg style="left:1142px;top:354px" width="7" height="4" viewBox="0 0 7 4"><path d="M0 0H7L3.500 4Z" fill="#777"/></svg>
<!-- slider rows -->
<span class="t g" style="transform:scaleX(1.0420);left:940px;top:379.5px">透明度(<u>T</u>)</span>
<div class="abs" style="left:1004px;top:386px;width:58px;height:1px;background:#a6a6a6"></div>
<div class="abs" style="left:1004px;top:385.5px;width:35px;height:2px;background:#666"></div>
<div class="abs" style="left:1038px;top:381.5px;width:2px;height:10px;background:#666"></div>
<div class="abs" style="left:1068px;top:376px;width:85px;height:21px;border:1px solid #ababab;background:#fff"></div>
<span class="t g" style="transform:scaleX(1.0187);left:1075px;top:379px;font-size:12.500px">60%</span>
<svg style="left:1142.500px;top:380px" width="8" height="15" viewBox="0 0 8 15" fill="none" stroke="#777" stroke-width="0.900"><path d="M0.600 4.200L3.700 0.900L6.800 4.200M0.600 11L3.700 14.300L6.800 11"/></svg>
<span class="t g" style="transform:scaleX(0.9002);left:940px;top:408.5px">サイズ(<u>S</u>)</span>
<div class="abs" style="left:1004px;top:415px;width:58px;height:1px;background:#a6a6a6"></div>
<div class="abs" style="left:1004px;top:414.5px;width:29px;height:2px;background:#666"></div>
<div class="abs" style="left:1032px;top:410.5px;width:2px;height:10px;background:#666"></div>
<div class="abs" style="left:1068px;top:405px;width:85px;height:21px;border:1px solid #ababab;background:#fff"></div>
<span class="t g" style="transform:scaleX(1.0161);left:1075px;top:408px;font-size:12.500px">100%</span>
<svg style="left:1142.500px;top:409px" width="8" height="15" viewBox="0 0 8 15" fill="none" stroke="#777" stroke-width="0.900"><path d="M0.600 4.200L3.700 0.900L6.800 4.200M0.600 11L3.700 14.300L6.800 11"/></svg>
<span class="t g" style="transform:scaleX(0.8940);left:940px;top:437.5px">ぼかし(<u>B</u>)</span>
<div class="abs" style="left:1004px;top:444px;width:58px;height:1px;background:#a6a6a6"></div>
<div class="abs" style="left:1004px;top:443.5px;width:3.5px;height:2px;background:#666"></div>
<div class="abs" style="left:1006.5px;top:439.5px;width:2px;height:10px;background:#666"></div>
<div class="abs" style="left:1068px;top:434px;width:85px;height:21px;border:1px solid #ababab;background:#fff"></div>
<span class="t g" style="transform:scaleX(1.1026);left:1075px;top:437px;font-size:12.500px">4 pt</span>
<svg style="left:1142.500px;top:438px" width="8" height="15" viewBox="0 0 8 15" fill="none" stroke="#777" stroke-width="0.900"><path d="M0.600 4.200L3.700 0.900L6.800 4.200M0.600 11L3.700 14.300L6.800 11"/></svg>
<span class="t g" style="transform:scaleX(1.0371);left:940px;top:466.5px">角度(<u>A</u>)</span>
<div class="abs" style="left:1004px;top:473px;width:58px;height:1px;background:#a6a6a6"></div>
<div class="abs" style="left:1004px;top:472.5px;width:8.5px;height:2px;background:#666"></div>
<div class="abs" style="left:1011.5px;top:468.5px;width:2px;height:10px;background:#666"></div>
<div class="abs" style="left:1068px;top:463px;width:85px;height:21px;border:1px solid #ababab;background:#fff"></div>
<span class="t g" style="transform:scaleX(1.1107);left:1075px;top:466px;font-size:12.500px">45°</span>
<svg style="left:1142.500px;top:467px" width="8" height="15" viewBox="0 0 8 15" fill="none" stroke="#777" stroke-width="0.900"><path d="M0.600 4.200L3.700 0.900L6.800 4.200M0.600 11L3.700 14.300L6.800 11"/></svg>
<span class="t g" style="transform:scaleX(1.0449);left:940px;top:495.5px">距離(<u>D</u>)</span>
<div class="abs" style="left:1004px;top:502px;width:58px;height:1px;background:#a6a6a6"></div>
<div class="abs" style="left:1004px;top:501.5px;width:4px;height:2px;background:#666"></div>
<div class="abs" style="left:1007px;top:497.5px;width:2px;height:10px;background:#666"></div>
<div class="abs" style="left:1068px;top:492px;width:85px;height:21px;border:1px solid #ababab;background:#fff"></div>
<span class="t g" style="transform:scaleX(1.0787);left:1075px;top:495px;font-size:12.500px">13 pt</span>
<svg style="left:1142.500px;top:496px" width="8" height="15" viewBox="0 0 8 15" fill="none" stroke="#777" stroke-width="0.900"><path d="M0.600 4.200L3.700 0.900L6.800 4.200M0.600 11L3.700 14.300L6.800 11"/></svg>
<!-- collapsed sections -->
<svg style="left:927px;top:534.5px" width="6" height="9" viewBox="0 0 6 9" fill="none" stroke="#777" stroke-width="0.900"><path d="M0.600 0.800L4.800 4.400L0.600 8Z"/></svg>
<span class="t" style="transform:scaleX(0.9993);left:940px;top:532.5px;font-weight:bold;color:#444">反射</span>
<svg style="left:927px;top:560.5px" width="6" height="9" viewBox="0 0 6 9" fill="none" stroke="#777" stroke-width="0.900"><path d="M0.600 0.800L4.800 4.400L0.600 8Z"/></svg>
<span class="t" style="transform:scaleX(0.9993);left:940px;top:558.5px;font-weight:bold;color:#444">光彩</span>
<svg style="left:927px;top:586.5px" width="6" height="9" viewBox="0 0 6 9" fill="none" stroke="#777" stroke-width="0.900"><path d="M0.600 0.800L4.800 4.400L0.600 8Z"/></svg>
<span class="t" style="transform:scaleX(0.8607);left:940px;top:584.5px;font-weight:bold;color:#444">ぼかし</span>
<svg style="left:927px;top:612.5px" width="6" height="9" viewBox="0 0 6 9" fill="none" stroke="#777" stroke-width="0.900"><path d="M0.600 0.800L4.800 4.400L0.600 8Z"/></svg>
<span class="t" style="transform:scaleX(1.0927);left:940px;top:610.5px;font-weight:bold;color:#444">3-D 書式</span>
<svg style="left:927px;top:638.5px" width="6" height="9" viewBox="0 0 6 9" fill="none" stroke="#777" stroke-width="0.900"><path d="M0.600 0.800L4.800 4.400L0.600 8Z"/></svg>
<span class="t" style="transform:scaleX(1.0927);left:940px;top:636.5px;font-weight:bold;color:#444">3-D 回転</span>
<svg style="left:927px;top:664.5px" width="6" height="9" viewBox="0 0 6 9" fill="none" stroke="#777" stroke-width="0.900"><path d="M0.600 0.800L4.800 4.400L0.600 8Z"/></svg>
<span class="t" style="transform:scaleX(0.9109);left:940px;top:662.5px;font-weight:bold;color:#444">アート効果</span>
<!-- ===== status bar ===== -->
<div class="abs" style="left:0;top:831px;width:1190px;height:1px;background:#c6c6c6"></div>
<div class="abs" style="left:0;top:832px;width:1190px;height:22px;background:#f3f3f3"></div>
<span class="t g" style="transform:scaleX(0.6536);left:8.500px;top:834.500px;font-size:13px">スライド</span>
<span class="t g" style="transform:scaleX(1.0063);left:47.500px;top:834.500px;font-size:12.500px">1/1</span>
<svg style="left:84.500px;top:835px" width="15" height="13" viewBox="0 0 15 13" fill="none" stroke="#5a5a5a" stroke-width="0.900"><path d="M6.500 2C5 0.800 2.500 0.800 0.500 1.200V10.200C2.500 9.800 5 9.800 6.500 11V2Z"/><path d="M6.500 2C8 0.800 10 0.800 12.500 1.200V3.500M6.500 11C7.500 10.200 9 9.900 10.500 9.900"/><path d="M8.800 6.500L10.800 8.500L14.200 3.500" stroke-width="1.100"/><path d="M5.500 11.500L6.500 12.500L7.500 11.500" stroke-width="0.800"/></svg>
<span class="t g" style="transform:scaleX(0.9463);left:117.500px;top:834.500px;font-size:12.500px">日本語</span>
<svg style="left:684px;top:835.500px" width="12" height="13" viewBox="0 0 12 13" fill="none" stroke="#5a5a5a" stroke-width="1"><path d="M6 0.500L9 4H3Z" fill="#5a5a5a" stroke="none"/><path d="M0.500 6H11.500M0.500 8.500H11.500M0.500 11H8.500"/></svg>
<span class="t g" style="transform:scaleX(0.6664);left:700.500px;top:834.500px;font-size:13px">ノート</span>
<svg style="left:746px;top:835.500px" width="15" height="14" viewBox="0 0 15 14"><path d="M1.500 0.500H13.500Q14.500 0.500 14.500 1.500V8.500Q14.500 9.500 13.500 9.500H6.500L3.500 13V9.500H1.500Q0.500 9.500 0.500 8.500V1.500Q0.500 0.500 1.500 0.500Z" fill="#5a5a5a"/></svg>
<span class="t g" style="transform:scaleX(0.6536);left:762.500px;top:834.500px;font-size:13px">コメント</span>
<div class="abs" style="left:815px;top:832px;width:40px;height:22px;background:#c6c6c6"></div>
<svg style="left:828px;top:835px" width="15" height="13" viewBox="0 0 15 13" fill="none" stroke="#5a5a5a" stroke-width="1"><rect x="0.500" y="0.500" width="14" height="12"/><path d="M3.500 0.500V12.500M3.500 8.500H14.500"/><rect x="6" y="3" width="6" height="3"/></svg>
<svg style="left:868px;top:835px" width="14" height="13" viewBox="0 0 14 13" fill="none" stroke="#5a5a5a" stroke-width="1"><rect x="0.500" y="0.500" width="5" height="4"/><rect x="8.500" y="0.500" width="5" height="4"/><rect x="0.500" y="8.500" width="5" height="4"/><rect x="8.500" y="8.500" width="5" height="4"/></svg>
<svg style="left:908px;top:835px" width="14" height="14" viewBox="0 0 14 14" fill="none" stroke="#5a5a5a" stroke-width="0.900"><path d="M0.500 0.500H6.500V11.500H0.500ZM6.500 0.500H12.500V11.500H6.500Z"/><path d="M2 2.500H5.500M2 4.500H5.500M2 6.500H5.500M2 8.500H5.500M7.500 2.500H11M7.500 4.500H11M7.500 6.500H11M7.500 8.500H11" stroke-width="1"/><path d="M6.500 11.500V13.500"/></svg>
<svg style="left:947px;top:835px" width="15" height="14" viewBox="0 0 15 14" fill="none" stroke="#5a5a5a" stroke-width="1"><path d="M0 1H15" stroke-width="1.600"/><path d="M1.500 1.500V7.500H13.500V1.500"/><path d="M4 4.500H11"/><path d="M7.500 7.500V12.500M5 12.500H10"/></svg>
<div class="abs" style="left:981px;top:842px;width:8px;height:1px;background:#5a5a5a"></div>
<div class="abs" style="left:994px;top:842px;width:100px;height:1px;background:#5a5a5a"></div>
<div class="abs" style="left:1044px;top:840px;width:1px;height:5px;background:#5a5a5a"></div>
<div class="abs" style="left:1019px;top:837px;width:5px;height:11px;background:#666"></div>
<div class="abs" style="left:1099px;top:842px;width:7px;height:1px;background:#5a5a5a"></div>
<div class="abs" style="left:1102px;top:839px;width:1px;height:7px;background:#5a5a5a"></div>
<span class="t g" style="transform:scaleX(1.0387);left:1119.500px;top:834.500px;font-size:12.500px">57%</span>
<svg style="left:1159px;top:835px" width="14" height="14" viewBox="0 0 14 14" fill="none" stroke="#5a5a5a" stroke-width="1"><rect x="0.500" y="0.500" width="12.500" height="12.500" rx="0.300"/><path d="M6.800 1V4.800M6.800 8.800V12.600M1 6.800H4.800M8.800 6.800H12.600" stroke-width="0.900"/><path d="M5.600 3.200L6.800 2L8 3.200M5.600 10.400L6.800 11.600L8 10.400M3.200 5.600L2 6.800L3.200 8M10.400 5.600L11.600 6.800L10.400 8" stroke-width="0.800"/></svg>
<div id="frame"></div>
</div>
</body>
</html>
